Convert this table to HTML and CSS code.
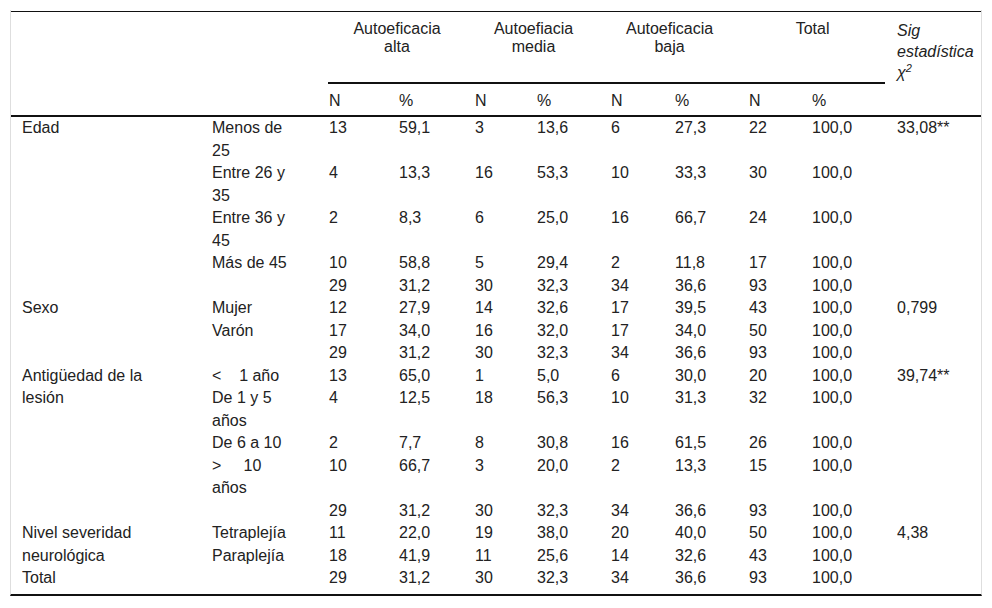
FILE: index.html
```html
<!DOCTYPE html>
<html lang="es">
<head>
<meta charset="utf-8">
<title>Tabla</title>
<link rel="stylesheet" href="styles.css">
</head>
<body>
<div class="wrap">
<table class="tbl">
<colgroup>
<col class="c1"><col class="c2"><col class="c3"><col class="c4"><col class="c5"><col class="c6"><col class="c7"><col class="c8"><col class="c9"><col class="c10"><col class="c11">
</colgroup>
<thead>
<tr class="hr1">
<th rowspan="2" class="lab1 hcell"></th>
<th rowspan="2" class="lab2 hcell"></th>
<th colspan="2" class="grp g1">Autoeficacia<br>alta</th>
<th colspan="2" class="grp g2">Autoefiacia<br>media</th>
<th colspan="2" class="grp g3">Autoeficacia<br>baja</th>
<th colspan="2" class="grp g4">Total</th>
<th rowspan="2" class="sig hcell"><i>Sig estadística χ<sup>2</sup></i></th>
</tr>
<tr class="hr2">
<th class="sub">N</th><th class="sub">%</th>
<th class="sub">N</th><th class="sub">%</th>
<th class="sub">N</th><th class="sub">%</th>
<th class="sub">N</th><th class="sub">%</th>
</tr>
</thead>
<tbody>
<tr><td rowspan="5" class="lab1">Edad</td><td class="lab2">Menos de 25</td><td>13</td><td>59,1</td><td>3</td><td>13,6</td><td>6</td><td>27,3</td><td>22</td><td>100,0</td><td rowspan="5" class="sigv">33,08**</td></tr>
<tr><td class="lab2">Entre 26 y 35</td><td>4</td><td>13,3</td><td>16</td><td>53,3</td><td>10</td><td>33,3</td><td>30</td><td>100,0</td></tr>
<tr><td class="lab2">Entre 36 y 45</td><td>2</td><td>8,3</td><td>6</td><td>25,0</td><td>16</td><td>66,7</td><td>24</td><td>100,0</td></tr>
<tr><td class="lab2">Más de 45</td><td>10</td><td>58,8</td><td>5</td><td>29,4</td><td>2</td><td>11,8</td><td>17</td><td>100,0</td></tr>
<tr><td class="lab2"></td><td>29</td><td>31,2</td><td>30</td><td>32,3</td><td>34</td><td>36,6</td><td>93</td><td>100,0</td></tr>
<tr><td rowspan="3" class="lab1">Sexo</td><td class="lab2">Mujer</td><td>12</td><td>27,9</td><td>14</td><td>32,6</td><td>17</td><td>39,5</td><td>43</td><td>100,0</td><td rowspan="3" class="sigv">0,799</td></tr>
<tr><td class="lab2">Varón</td><td>17</td><td>34,0</td><td>16</td><td>32,0</td><td>17</td><td>34,0</td><td>50</td><td>100,0</td></tr>
<tr><td class="lab2"></td><td>29</td><td>31,2</td><td>30</td><td>32,3</td><td>34</td><td>36,6</td><td>93</td><td>100,0</td></tr>
<tr><td rowspan="5" class="lab1">Antigüedad de la lesión</td><td class="lab2">&lt;&nbsp;&nbsp;&nbsp;&nbsp;1 año</td><td>13</td><td>65,0</td><td>1</td><td>5,0</td><td>6</td><td>30,0</td><td>20</td><td>100,0</td><td rowspan="5" class="sigv">39,74**</td></tr>
<tr><td class="lab2">De 1 y 5 años</td><td>4</td><td>12,5</td><td>18</td><td>56,3</td><td>10</td><td>31,3</td><td>32</td><td>100,0</td></tr>
<tr><td class="lab2">De 6 a 10</td><td>2</td><td>7,7</td><td>8</td><td>30,8</td><td>16</td><td>61,5</td><td>26</td><td>100,0</td></tr>
<tr><td class="lab2">&gt;&nbsp;&nbsp;&nbsp;&nbsp;&nbsp;10 años</td><td>10</td><td>66,7</td><td>3</td><td>20,0</td><td>2</td><td>13,3</td><td>15</td><td>100,0</td></tr>
<tr><td class="lab2"></td><td>29</td><td>31,2</td><td>30</td><td>32,3</td><td>34</td><td>36,6</td><td>93</td><td>100,0</td></tr>
<tr><td rowspan="2" class="lab1">Nivel severidad neurológica</td><td class="lab2">Tetraplejía</td><td>11</td><td>22,0</td><td>19</td><td>38,0</td><td>20</td><td>40,0</td><td>50</td><td>100,0</td><td rowspan="2" class="sigv">4,38</td></tr>
<tr><td class="lab2">Paraplejía</td><td>18</td><td>41,9</td><td>11</td><td>25,6</td><td>14</td><td>32,6</td><td>43</td><td>100,0</td></tr>
<tr class="last"><td class="lab1">Total</td><td class="lab2"></td><td>29</td><td>31,2</td><td>30</td><td>32,3</td><td>34</td><td>36,6</td><td>93</td><td>100,0</td><td class="sigv"></td></tr>
</tbody>
</table>
</div>
</body>
</html>
```
FILE: styles.css
```css
html, body {
  margin: 0;
  padding: 0;
  background: #fff;
}
body {
  font-family: "Liberation Sans", Arial, sans-serif;
  font-size: 16px;
  color: #222;
}
.wrap {
  margin: 10px 0 0 10px;
  width: 970px;
  padding-top: 1px;
  border-left: 1px solid #dedede;
  border-right: 1px solid #dedede;
  border-bottom: 2px solid #111;
}
.tbl {
  width: 970px;
  table-layout: fixed;
  border-collapse: separate;
  border-spacing: 0;
  border-top: 1px solid #111;
}
.c1 { width: 195px; }
.c2 { width: 122px; }
.c3 { width: 70px; }
.c4 { width: 76px; }
.c5 { width: 62px; }
.c6 { width: 74px; }
.c7 { width: 64px; }
.c8 { width: 74px; }
.c9 { width: 63px; }
.c10 { width: 74px; }
.c11 { width: 96px; }

.tbl th,
.tbl td {
  padding: 0 0 0 1px;
  text-align: left;
  vertical-align: top;
  font-weight: normal;
}
.tbl thead th {
  line-height: normal;
}
.tbl .hcell {
  border-bottom: 2px solid #111;
}
.tbl .lab1 {
  padding-left: 11px;
  padding-right: 30px;
}
.tbl .lab2 {
  padding-left: 6px;
  padding-right: 30px;
}
.tbl .grp {
  text-align: center;
  padding-top: 8px;
  padding-bottom: 26px;
  border-bottom: 2px solid #111;
}
.tbl .g1 { padding-right: 9px; }
.tbl .g2 { padding-right: 18px; }
.tbl .g3 { padding-right: 20px; }
.tbl .g4 { padding-right: 9px; }
.tbl .sub {
  padding-top: 8px;
  padding-bottom: 5px;
  border-bottom: 2px solid #111;
}
.tbl .sig {
  padding-left: 12px;
  padding-top: 8px;
  line-height: 21px;
}
.tbl .sig sup {
  font-size: 11px;
  line-height: 0;
}
.tbl tbody td {
  line-height: 22.5px;
}
.tbl .sigv {
  padding-left: 12px;
}
.tbl .last td {
  padding-bottom: 4px;
}
```
